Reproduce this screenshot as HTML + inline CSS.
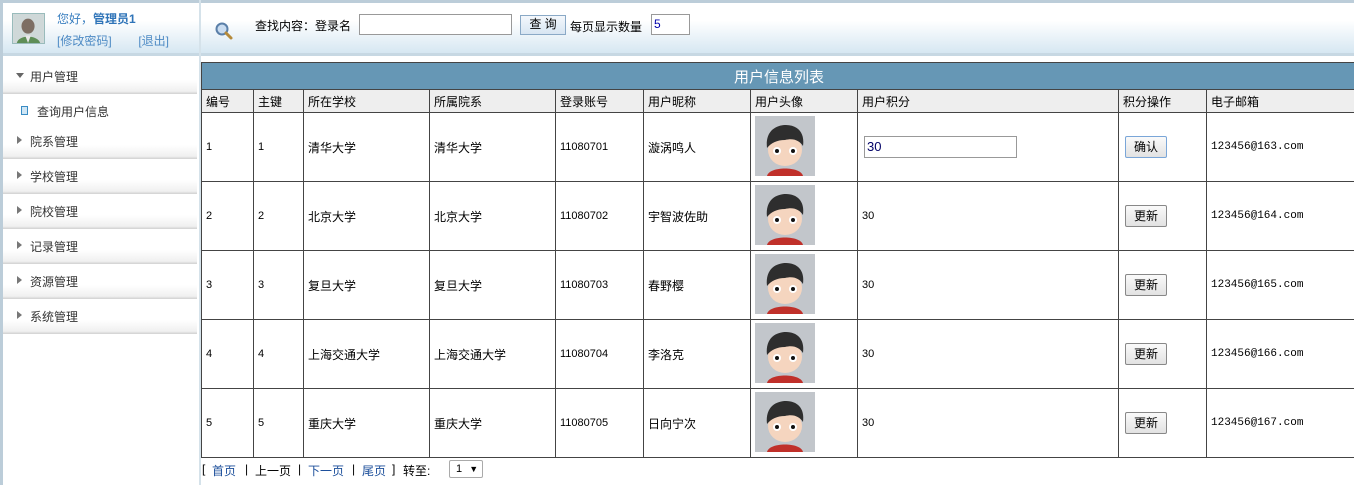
<!DOCTYPE html>
<html><head><meta charset="utf-8"><style>
*{margin:0;padding:0;box-sizing:border-box}
body{width:1354px;height:485px;overflow:hidden;background:#fff;font-family:"Liberation Sans","Noto Sans CJK SC",sans-serif;font-size:12px;color:#000;position:relative}
.hdr{position:absolute;left:0;top:0;width:1354px;height:56px;border-top:3px solid #bccdd9;background:linear-gradient(#fff 0%,#fff 35%,#d6e7f2 100%);border-bottom:3px solid #c7d8e3}
.lb{position:absolute;left:0;top:0;width:3px;height:485px;background:#bccdd9}
.vd{position:absolute;left:199px;top:0;width:2px;height:485px;background:#d5e2ea}
.uname{position:absolute;left:57px;top:10px;color:#3a7fc0;font-size:12px}
.uname b{font-weight:bold;color:#2f74b8}
.ulinks{position:absolute;left:57px;top:32px;color:#4d8ac4}
.av{position:absolute;left:12px;top:13px;width:33px;height:31px;border:1px solid #9bb}
.search{position:absolute;left:255px;top:17px;font-size:12px}
.inp{position:absolute;border:1px solid #999;background:#fff;height:21px}
.btn{position:absolute;border:1px solid #8aa9c6;background:linear-gradient(#f4f8fc,#d7e5f2);text-align:center;line-height:17px;font-size:12px}
.menu{position:absolute;left:3px;width:194px;height:35px;background:linear-gradient(#fff 0%,#fff 60%,#f0f0f0 92%,#d0d0d0 100%);color:#333;font-size:12px}
.menu span{position:absolute;left:27px;top:9px}
.menu i{position:absolute;left:14px;top:12px;width:0;height:0;border-top:4px solid transparent;border-bottom:4px solid transparent;border-left:5px solid #777}
table{position:absolute;left:201px;top:62px;border-collapse:collapse;table-layout:fixed;width:1155px}
td{border:1px solid #444;padding:0 4px;font-size:11px;vertical-align:middle;white-space:nowrap;overflow:hidden}
tr.t td{background:#6697b5;color:#fff;text-align:center;font-size:15px;height:27px;border:1px solid #444}
tr.h td{background:#eeeeee;height:23px;font-size:12px}
tr.r td{height:69px}
.cn{font-size:12px}
.rb{display:inline-block;border:1px solid #888;background:linear-gradient(#fafafa,#e2e2e2);width:42px;height:22px;line-height:20px;text-align:center;font-size:12px;margin-left:2px;border-radius:2px}
.mono{font-family:"Liberation Mono",monospace;font-size:11px}
.pg span{position:absolute;top:462px;font-size:12px;color:#000}
.pg span.a{color:#1b4e9a}
</style></head><body>
<div class="hdr"></div>
<div class="lb"></div>
<div class="vd"></div>
<svg class="av" viewBox="0 0 33 31"><rect width="33" height="31" fill="#cfd8d8"/><ellipse cx="16" cy="13" rx="7" ry="8" fill="#7d6e63"/><path d="M4 31 C6 22 26 22 29 31Z" fill="#5f8e57"/><path d="M13 23 L16 31 L19 23Z" fill="#e8e8e8"/></svg>
<div class="uname">您好，<b>管理员1</b></div>
<div class="ulinks">[修改密码]&nbsp;&nbsp;&nbsp;&nbsp;&nbsp;&nbsp;&nbsp;&nbsp;[退出]</div>
<svg style="position:absolute;left:214px;top:21px" width="20" height="20" viewBox="0 0 20 20"><circle cx="8" cy="8" r="5.5" fill="#c9dcf0" stroke="#5a7fa8" stroke-width="2"/><line x1="12" y1="12" x2="17" y2="17" stroke="#b58a3a" stroke-width="3" stroke-linecap="round"/></svg>
<div class="search">查找内容：登录名</div>
<div class="inp" style="left:359px;top:14px;width:153px"></div>
<div class="btn" style="left:520px;top:15px;width:46px;height:20px">查 询</div>
<div style="position:absolute;left:570px;top:18px">每页显示数量</div>
<div class="inp" style="left:651px;top:14px;width:39px;padding-left:2px;line-height:19px;color:#00a">5</div>

<div class="menu" style="top:59px"><i style="border:none;border-left:4px solid transparent;border-right:4px solid transparent;border-top:5px solid #666;top:14px;left:13px"></i><span>用户管理</span></div>
<div style="position:absolute;left:21px;top:106px;width:7px;height:9px;border:1px solid #3a8cc4;background:#cfe6f5"></div>
<div style="position:absolute;left:37px;top:103px;color:#333">查询用户信息</div>
<div class="menu" style="top:124px"><i></i><span>院系管理</span></div>
<div class="menu" style="top:159px"><i></i><span>学校管理</span></div>
<div class="menu" style="top:194px"><i></i><span>院校管理</span></div>
<div class="menu" style="top:229px"><i></i><span>记录管理</span></div>
<div class="menu" style="top:264px"><i></i><span>资源管理</span></div>
<div class="menu" style="top:299px"><i></i><span>系统管理</span></div>

<svg width="0" height="0" style="position:absolute"><defs><g id="kid"><rect width="60" height="60" fill="#c2c6cb"/><path d="M12 60 C14 50 46 50 48 60Z" fill="#c0302a"/><ellipse cx="30" cy="34" rx="17" ry="16" fill="#f5d5bf"/><path d="M12 32 C10 14 22 9 31 9 C42 9 50 16 48 30 C44 24 38 22 30 24 C22 24 16 27 12 32Z" fill="#2e2e2e"/><circle cx="22" cy="35" r="4" fill="#fff"/><circle cx="38" cy="35" r="4" fill="#fff"/><circle cx="22" cy="35" r="2" fill="#111"/><circle cx="38" cy="35" r="2" fill="#111"/></g></defs></svg>

<table>
<colgroup><col style="width:52px"><col style="width:50px"><col style="width:126px"><col style="width:126px"><col style="width:88px"><col style="width:107px"><col style="width:107px"><col style="width:261px"><col style="width:88px"><col style="width:150px"></colgroup>
<tr class="t"><td colspan="10">用户信息列表</td></tr>
<tr class="h"><td>编号</td><td>主键</td><td>所在学校</td><td>所属院系</td><td>登录账号</td><td>用户昵称</td><td>用户头像</td><td>用户积分</td><td>积分操作</td><td>电子邮箱</td></tr>
<tr class="r"><td>1</td><td>1</td><td class="cn">清华大学</td><td class="cn">清华大学</td><td>11080701</td><td class="cn">漩涡鸣人</td><td><svg width="60" height="60"><use href="#kid"/></svg></td><td><div style="margin-left:2px;width:153px;height:22px;border:1px solid #999;font-size:13px;line-height:20px;padding-left:2px;color:#006">30</div></td><td><span class="rb" style="border-color:#7aa6d8">确认</span></td><td class="mono">123456@163.com</td></tr>
<tr class="r"><td>2</td><td>2</td><td class="cn">北京大学</td><td class="cn">北京大学</td><td>11080702</td><td class="cn">宇智波佐助</td><td><svg width="60" height="60"><use href="#kid"/></svg></td><td>30</td><td><span class="rb">更新</span></td><td class="mono">123456@164.com</td></tr>
<tr class="r"><td>3</td><td>3</td><td class="cn">复旦大学</td><td class="cn">复旦大学</td><td>11080703</td><td class="cn">春野樱</td><td><svg width="60" height="60"><use href="#kid"/></svg></td><td>30</td><td><span class="rb">更新</span></td><td class="mono">123456@165.com</td></tr>
<tr class="r"><td>4</td><td>4</td><td class="cn">上海交通大学</td><td class="cn">上海交通大学</td><td>11080704</td><td class="cn">李洛克</td><td><svg width="60" height="60"><use href="#kid"/></svg></td><td>30</td><td><span class="rb">更新</span></td><td class="mono">123456@166.com</td></tr>
<tr class="r"><td>5</td><td>5</td><td class="cn">重庆大学</td><td class="cn">重庆大学</td><td>11080705</td><td class="cn">日向宁次</td><td><svg width="60" height="60"><use href="#kid"/></svg></td><td>30</td><td><span class="rb">更新</span></td><td class="mono">123456@167.com</td></tr>
</table>
<div class="pg"><span style="left:202px">[</span><span class="a" style="left:212px">首页</span><span style="left:245px">|</span><span style="left:255px">上一页</span><span style="left:298px">|</span><span class="a" style="left:308px">下一页</span><span style="left:352px">|</span><span class="a" style="left:362px">尾页</span><span style="left:392px">]</span><span style="left:403px">转至:</span></div>
<div style="position:absolute;left:449px;top:460px;width:34px;height:18px;border:1px solid #aaa;border-radius:2px;font-size:11px;line-height:16px;padding-left:6px">1 <span style="font-size:9px;margin-left:4px">▼</span></div>
</body></html>
